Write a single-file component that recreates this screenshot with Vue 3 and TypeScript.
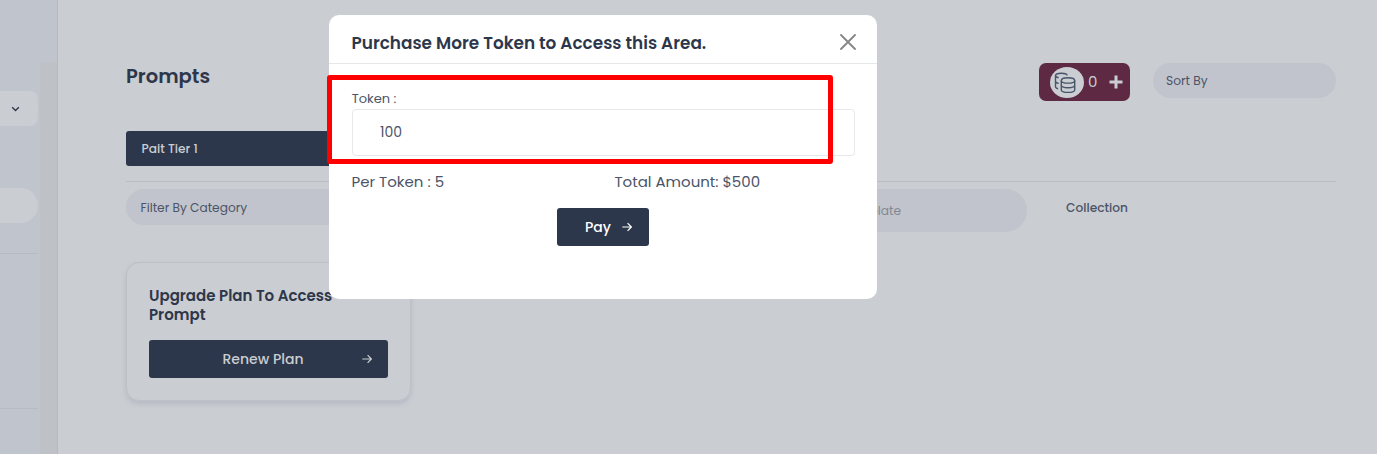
<script setup lang="ts">
import { ref } from 'vue'

const tokens = ref<number>(100)
const perToken = 5
const balance = 0
</script>

<template>
  <div class="page">
    <aside class="sidebar">
      <div class="nav">
        <div class="nav-item dropdown">
          <svg width="9" height="6" viewBox="0 0 9 6"><path d="M1.2 1.2 4.5 4.4 7.8 1.2" /></svg>
        </div>
        <div class="nav-item pill"></div>
        <hr class="first" />
        <hr class="second" />
      </div>
      <div class="track"></div>
    </aside>

    <main class="content">
      <header class="top">
        <h1>Prompts</h1>
        <div class="balance">
          <span class="coin">
            <svg width="22" height="22" viewBox="0 0 22 22">
              <path d="M1.500 3.600C1.500 2.200 4 1.300 7.300 1.300s5.800.9 5.800 2.300M1.500 3.600c0 1.100 1.200 1.800 3.200 2.100M1.500 3.600v11.200c0 .8.8 1.500 2.600 1.900M1.500 9.300c0 1.100 1.200 1.800 3.200 2.100" />
              <ellipse cx="14" cy="8.400" rx="6.700" ry="2.700" />
              <path d="M7.300 8.400v9.300c0 1.500 3 2.700 6.700 2.700s6.700-1.200 6.700-2.700V8.400M7.300 13c0 1.500 3 2.700 6.700 2.700s6.700-1.200 6.700-2.700" />
            </svg>
          </span>
          <span class="count">{{ balance }}</span>
          <svg class="plus" width="14" height="14" viewBox="0 0 14 14"><path d="M7 .5v13M.5 7h13" /></svg>
        </div>
        <div class="sort">Sort By</div>
      </header>

      <div class="tier">Pait Tier 1</div>
      <section class="filters">
        <div class="category">Filter By Category</div>
        <div class="search">Search Template</div>
        <div class="collection">Collection</div>
      </section>

      <article class="card">
        <h2>Upgrade Plan To Access<br />Prompt</h2>
        <button class="renew">
          <span>Renew Plan</span>
          <svg class="arrow" width="10" height="10" viewBox="0 0 10 10"><path d="M.3 5h9M5.600 1.200 9.300 5 5.600 8.800" /></svg>
        </button>
      </article>
    </main>

    <div class="modal">
      <div class="modal-head">
        <h3>Purchase More Token to Access this Area.</h3>
        <svg width="16" height="16" viewBox="0 0 16 16"><path d="M1 1 15 15M15 1 1 15" /></svg>
      </div>
      <div class="modal-body">
        <label>Token :</label>
        <div class="field">{{ tokens }}</div>
        <div class="sums">
          <span>Per Token : {{ perToken }}</span>
          <span>Total Amount: ${{ tokens * perToken }}</span>
        </div>
        <button class="pay">
          <span>Pay</span>
          <svg class="arrow" width="10" height="10" viewBox="0 0 10 10"><path d="M.3 5h9M5.600 1.200 9.300 5 5.600 8.800" /></svg>
        </button>
      </div>
    </div>
    <div class="highlight"></div>
  </div>
</template>

<style>
body { margin: 0; overflow: hidden; }
</style>

<style scoped>
* { box-sizing: border-box; }
.page {
  position: relative;
  display: flex;
  width: 1377px;
  height: 454px;
  overflow: hidden;
  background: #cacdd1;
  color: #4b5468;
  font-family: Poppins, Inter, sans-serif;
  font-size: 12.2px;
  white-space: nowrap;
}
svg { display: block; fill: none; stroke: currentColor; flex: none; }
h1, h2, h3, hr { margin: 0; }
button { border: 0; padding: 0; font-family: inherit; }
.sidebar { display: flex; width: 58px; background: #c0c4cd; border-right: 1px solid #b6babf; }
.nav { width: 38px; padding-top: 91px; }
.nav-item { height: 35px; background: #cacdd1; }
.dropdown { display: flex; align-items: center; padding-left: 11px; border-radius: 0 8px 8px 0; color: #2d374b; }
.dropdown svg { stroke-width: 1.4; }
.pill { margin-top: 62px; border-radius: 0 18px 18px 0; }
hr { border: 0; height: 1px; background: #b6bac2; }
.first { margin-top: 30px; }
.second { margin-top: 154px; }
.track { flex: 1; margin: 62px 0 0 2px; background: #bec2c6; }
.content { width: 1210px; margin-left: 68px; padding-top: 63px; }
.top { display: flex; height: 68px; }
h1 { flex: 1; padding-top: 1px; font-size: 19.5px; line-height: 26px; font-weight: 600; color: #2d374b; }
.balance { display: flex; align-items: center; width: 91px; height: 38px; padding-left: 11px; border-radius: 7px; background: #5d2943; color: #cacdd1; }
.coin { display: flex; align-items: center; justify-content: center; width: 34px; height: 31px; border-radius: 50%; background: #cacdd1; color: #48546a; }
.coin svg { stroke-width: 1.4; margin-top: 1px; margin-right: 4px; }
.count { width: 10px; margin-left: 4px; margin-top: -1px; font-size: 15px; }
.plus { margin-left: 11px; stroke-width: 3; }
.sort { width: 183px; height: 35px; margin-left: 23px; padding-left: 13px; border-radius: 18px; background: #c1c4cc; line-height: 36px; }
.tier { width: 300px; height: 35px; padding-left: 15.5px; border-radius: 3px; background: #2d374b; color: #cacdd1; line-height: 35px; font-weight: 500; }
.filters { display: flex; height: 81px; margin-top: 15px; padding-top: 7px; border-top: 1px solid #b9bdc2; }
.category { width: 300px; height: 36px; padding-left: 14.5px; border-radius: 18px; background: #c1c4cc; line-height: 37px; }
.search { width: 270px; height: 43px; margin-left: 331px; padding-right: 126px; border-radius: 22px; background: #c1c4cc; color: #828993; line-height: 43px; text-align: right; }
.collection { margin-left: 39px; line-height: 37px; font-weight: 500; }
.card { width: 285px; height: 139px; padding: 23px 23px 0 22px; border: 1px solid #bcc0c7; border-radius: 13px; box-shadow: 0 3px 5px #b5bac5; }
h2 { height: 54px; color: #2d374b; font-size: 15px; line-height: 19px; font-weight: 600; }
.renew, .pay { display: flex; align-items: center; height: 38px; border-radius: 3px; background: #2d374b; color: #cacdd1; font-size: 14px; font-weight: 500; }
.renew { width: 239px; padding-left: 73.5px; padding-right: 16px; justify-content: space-between; }
.arrow { stroke-width: 1.2; }
.modal { position: absolute; left: 329px; top: 15px; width: 548px; height: 284px; border-radius: 10px; background: #fff; }
.modal-head { display: flex; justify-content: space-between; align-items: center; height: 49px; padding: 6px 21.5px 0 22.5px; border-bottom: 1px solid #e6e7e9; color: #858585; }
.modal-head svg { stroke-width: 1.8; stroke-linecap: round; }
h3 { padding-top: 2px; font-size: 16.88px; line-height: 24px; font-weight: 600; color: #2d374b; }
.modal-body { padding: 25px 22px 0 23px; }
label { display: block; height: 20px; margin-left: -.3px; line-height: 20px; font-size: 13px; }
.field { height: 47px; padding-left: 27px; border: 1px solid #e7e8ea; border-radius: 4px; line-height: 45px; font-size: 14px; }
.sums { display: grid; grid-template-columns: 263px 1fr; height: 52px; margin-left: -.5px; padding-top: 14px; font-size: 15px; line-height: 24px; }
.pay { width: 92px; margin-left: 205px; padding: 0 17px 0 28px; justify-content: space-between; color: #fff; }
.highlight { position: absolute; left: 327px; top: 75px; width: 506px; height: 89px; border: 5px solid #f00; border-radius: 3px; }
</style>
